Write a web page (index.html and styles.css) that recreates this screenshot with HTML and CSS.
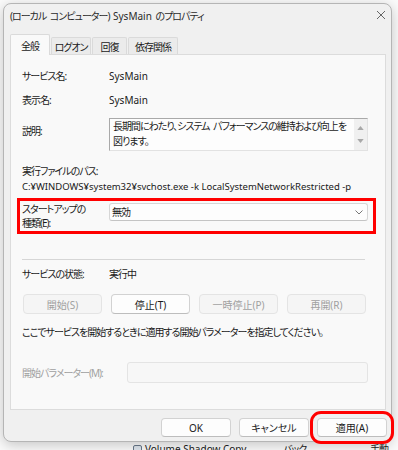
FILE: index.html
```html
<!DOCTYPE html>
<html lang="ja">
<head>
  <meta charset="UTF-8"/>
  <title>SysMain のプロパティ</title>
  <link rel="stylesheet" href="styles.css">
</head>
<body>
  <div class="desktop">
    <div class="backlist">
      <div class="back-row">
        <span class="back-icon"></span>
        <span class="back-name latin">Volume Shadow Copy</span>
        <span class="back-status">バック</span>
        <span class="back-type">手動</span>
      </div>
    </div>

    <div class="dialog">
      <div class="titlebar">
        <span class="title">(ローカル コンピューター) <span class="latin">SysMain</span> のプロパティ</span>
        <svg class="close" viewBox="0 0 10 10">
          <path d="M1 1L9 9M9 1L1 9" stroke="#666" stroke-width="1" fill="none"/>
        </svg>
      </div>
      <div class="tabs">
        <span class="tab active t1">全般</span>
        <span class="tab t2">ログオン</span>
        <span class="tab t3">回復</span>
        <span class="tab t4">依存関係</span>
      </div>

      <div class="panel">
        <div class="field first">
          <span class="label">サービス名:</span>
          <span class="value latin">SysMain</span>
        </div>
        <div class="field second">
          <span class="label">表示名:</span>
          <span class="value latin">SysMain</span>
        </div>
        <div class="field desc">
          <span class="label">説明:</span>
          <div class="memo">
            <div class="memo-text">長期間にわたり、システム パフォーマンスの維持および向上を<br>図ります。</div>
            <div class="memo-bar">
              <svg viewBox="0 0 8 5"><path d="M0 5L4 0L8 5Z" fill="#a8a8a8"/></svg>
              <svg viewBox="0 0 8 5"><path d="M0 0L4 5L8 0Z" fill="#a8a8a8"/></svg>
            </div>
          </div>
        </div>
        <div class="path-label">実行ファイルのパス:</div>
        <div class="path latin">C:¥WINDOWS¥system32¥svchost.exe -k LocalSystemNetworkRestricted -p</div>

        <div class="startup">
          <span class="label">スタートアップの<br>種類(E):</span>
          <div class="select">
            <span>無効</span>
            <svg viewBox="0 0 8 5"><path d="M0.5 0.5L4 4L7.5 0.5" stroke="#777" stroke-width="1" fill="none"/></svg>
          </div>
        </div>

        <div class="sep"></div>

        <div class="field status">
          <span class="label">サービスの状態:</span>
          <span class="value">実行中</span>
        </div>
        <div class="svc-buttons">
          <button class="btn" disabled>開始(S)</button>
          <button class="btn">停止(T)</button>
          <button class="btn" disabled>一時停止(P)</button>
          <button class="btn" disabled>再開(R)</button>
        </div>
        <div class="hint">ここでサービスを開始するときに適用する開始パラメーターを指定してください。</div>
        <div class="field params">
          <span class="label disabled">開始パラメーター(M):</span>
          <div class="param-input"></div>
        </div>
      </div>

      <div class="footer">
        <button class="btn latin">OK</button>
        <button class="btn">キャンセル</button>
        <button class="btn apply">適用(A)</button>
      </div>
    </div>
  </div>
</body>
</html>
```

FILE: styles.css
```css
* { box-sizing:border-box; }
body {
  margin:0; width:398px; height:450px; overflow:hidden; background:#fbfbfb;
  font-family:"Noto Sans","Noto Sans CJK JP",sans-serif; font-size:10px; color:#1a1a1a;
  font-feature-settings:"palt"; letter-spacing:-1px; word-spacing:2px;
}
.latin { letter-spacing:0; word-spacing:0; }
.desktop { position:relative; height:450px; }

/* services list behind the dialog */
.backlist { padding-top:442px; }
.back-row { display:flex; align-items:center; padding-left:133px; line-height:14px; height:14px; }
.back-icon { width:9px; height:9px; margin-right:3px; border:1px solid #6a7a8c; border-radius:2px; background:#dfe6ee; }
.back-name { width:138px; }
.back-status { width:87px; }

.dialog {
  position:absolute; left:3px; top:3px; width:389px; height:439px;
  background:#f0f0f0; border:1px solid #b5b5b5; border-radius:8px;
  box-shadow:0 3px 14px rgba(0,0,0,.22);
  display:flex; flex-direction:column;
}
.titlebar { height:22px; display:flex; align-items:center; justify-content:space-between; padding:0 5px 0 6px; }
.title { color:#2a2a2a; }
.close { width:10px; height:10px; }

.tabs { display:flex; align-items:flex-end; gap:1px; height:20px; margin:8px 0 0 6px; }
.tab {
  height:17px; display:flex; align-items:center; justify-content:center;
  background:#ebebeb; border:1px solid #dadada; border-bottom:none; border-radius:2px 2px 0 0;
}
.tab.active { height:21px; margin-bottom:-1px; background:#f9f9f9; position:relative; z-index:1; }
.t1 { width:40px; }
.t2 { width:40px; }
.t3 { width:35px; }
.t4 { width:50px; }

.panel {
  height:356px; margin:0 5px 0 6px; padding:0 17px 0 11px;
  background:#f9f9f9; border:1px solid #dcdcdc;
}
.field { display:flex; line-height:14px; }
.label { width:87px; flex:none; }
.first { margin-top:14px; }
.second { margin-top:10px; }
.desc { margin-top:11px; align-items:flex-start; }
.desc .label { padding-top:6px; }
.memo {
  flex:1; height:33px; display:flex; background:#fdfdfd;
  border:1px solid #e2e2e2; border-top-color:#a9a9a9; border-left-color:#a9a9a9;
}
.memo-text { flex:1; padding:0 3px; line-height:15px; }
.memo-bar { width:13px; background:#f0f0f0; display:flex; flex-direction:column; align-items:center; justify-content:space-around; padding:2px 0; }
.memo-bar svg { width:7px; height:4px; }
.path-label { margin-top:13px; line-height:14px; }
.path { margin-top:2px; line-height:14px; font-size:9.5px; }

.startup {
  display:flex; align-items:flex-start; height:36px; margin:4px -8px 0 -5px;
  padding:1px 5px 0 2px; border:3px solid #ff0000; line-height:14px;
}
.select {
  flex:1; height:18px; margin-top:1px; padding:0 4px 0 2px;
  display:flex; align-items:center; justify-content:space-between;
  background:#fdfdfd; border:1px solid #d6d6d6; border-bottom-color:#c4c4c4; border-radius:3px;
}
.select svg { width:8px; height:5px; }

.sep { height:1px; background:#d6d6d6; margin:25px 3px 0 0; }
.status { margin-top:7px; }

.btn {
  font:inherit; color:#1a1a1a; height:20px; padding:0;
  background:#fdfdfd; border:1px solid #d2d2d2; border-bottom-color:#bdbdbd; border-radius:4px;
}
.btn:disabled { color:#a0a0a0; background:#f5f5f5; border-color:#e4e4e4; }
.svc-buttons { display:flex; gap:9px; margin:13px 0 0 1px; }
.svc-buttons .btn { width:79px; }
.hint { margin-top:11px; line-height:14px; }
.params { margin-top:23px; align-items:center; }
.params .label { width:105px; }
.disabled { color:#a0a0a0; }
.param-input { flex:1; height:21px; background:#f7f7f7; border:1px solid #e4e4e4; border-radius:3px; }

.footer { display:flex; justify-content:flex-end; gap:8px; margin-top:8px; padding-right:4px; }
.footer .btn { width:70px; height:19px; }
.apply { outline:3px solid #ff0000; outline-offset:4px; }
```
